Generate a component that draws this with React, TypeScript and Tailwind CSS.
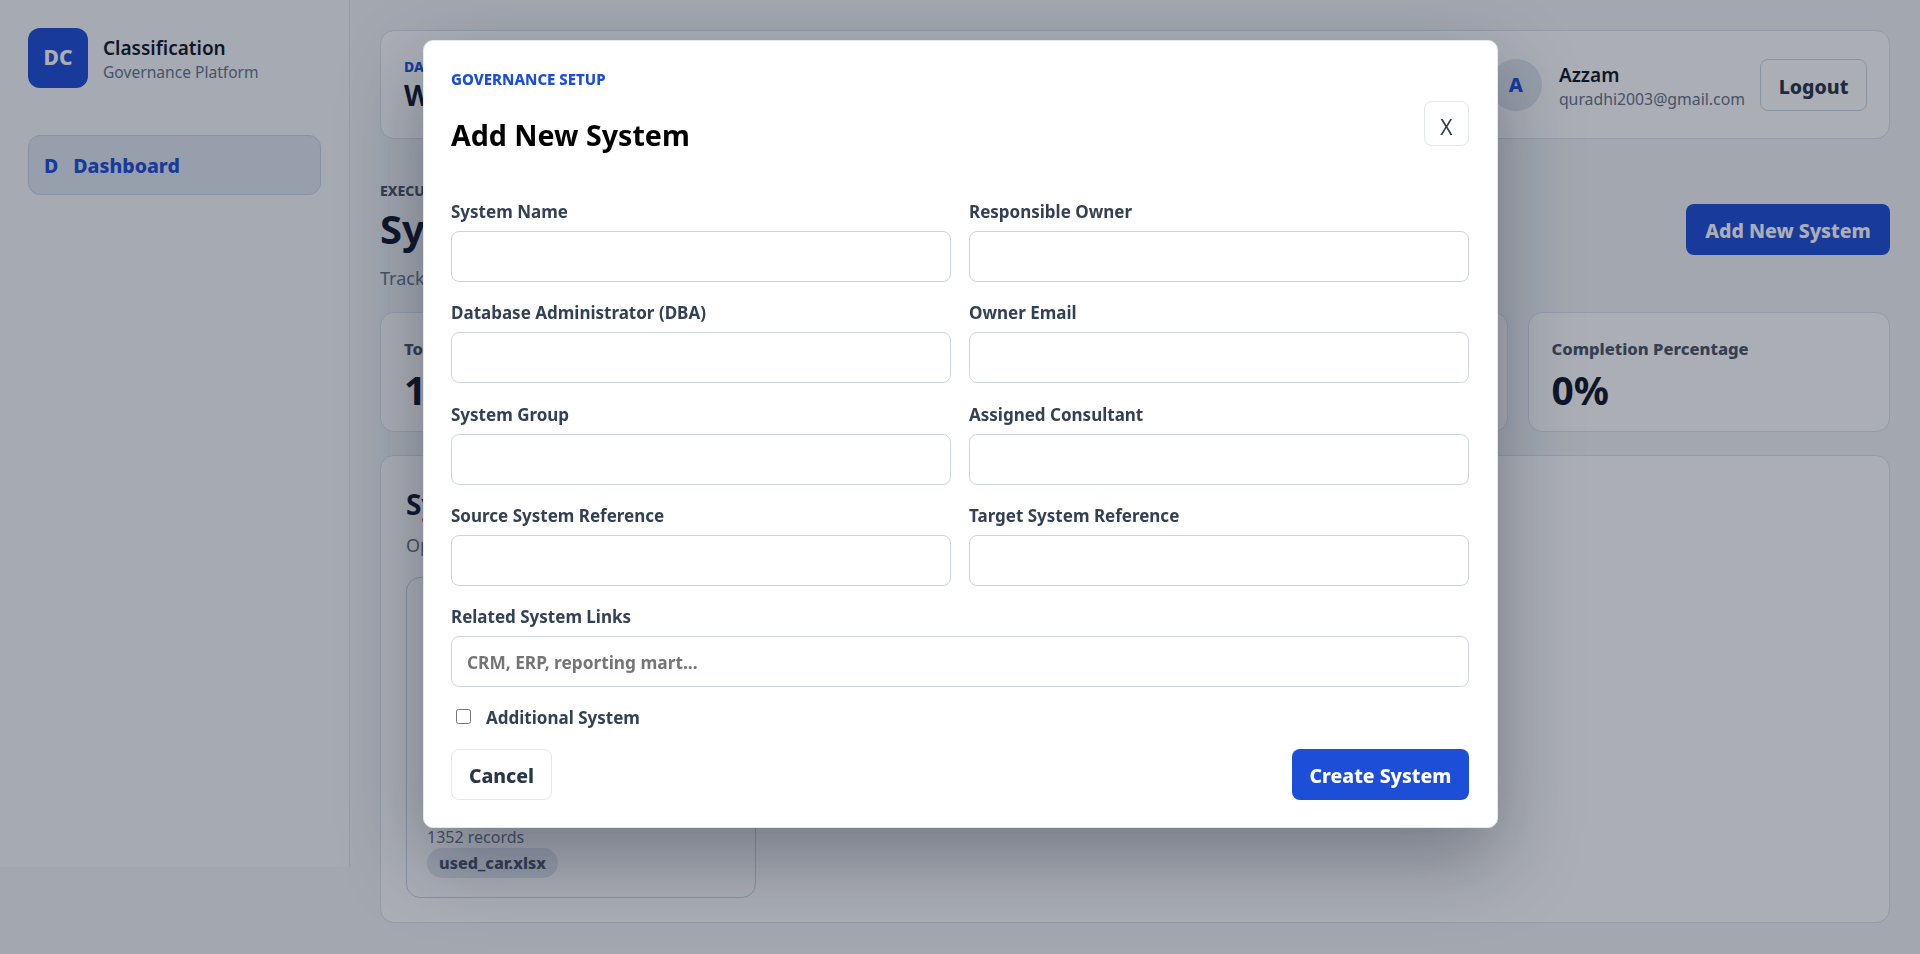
const font = "font-['Noto_Sans','Open_Sans',sans-serif]";

const formFields = [
  "System Name",
  "Responsible Owner",
  "Database Administrator (DBA)",
  "Owner Email",
  "System Group",
  "Assigned Consultant",
  "Source System Reference",
  "Target System Reference",
];

const metrics = [
  { label: "Total Systems", value: "1" },
  { label: "Completed Systems", value: "0" },
  { label: "Active Systems", value: "1" },
  { label: "Completion Percentage", value: "0%" },
];

function Sidebar() {
  return (
    <aside className="w-[350px] h-[867px] shrink-0 bg-[#f8fafc] border-r border-[#dbe3ee] px-[28px] pt-[28px]">
      <div className="flex items-center gap-[15px]">
        <div className="w-[60px] h-[60px] rounded-[12px] bg-[#1d4ed8] text-white flex items-center justify-center text-[21px] font-extrabold">
          DC
        </div>
        <div className="pt-[2px]">
          <div className="text-[19px] leading-[26px] font-semibold text-[#0f172a]">Classification</div>
          <div className="text-[15.6px] leading-[23px] text-[#64748b]">Governance Platform</div>
        </div>
      </div>
      <div className="mt-[47px] h-[60px] pt-[2px] rounded-[12px] border border-[#cbd5e1] bg-[#e0e7f1] flex items-center px-[15px] gap-[15px] text-[#1d4ed8] font-extrabold text-[19.5px]">
        <span>D</span>
        <span>Dashboard</span>
      </div>
    </aside>
  );
}

function Topbar() {
  return (
    <header className="h-[109px] bg-white border border-[#dbe3ee] rounded-[14px] flex items-center justify-between pl-[23px] pr-[22px]">
      <div>
        <div className="text-[14px] font-extrabold uppercase text-[#1d4ed8]">Dashboard</div>
        <div className="text-[28px] leading-[36px] font-bold text-[#0f172a]">Welcome back</div>
      </div>
      <div className="flex items-center gap-[17px]">
        <div className="w-[52px] h-[52px] rounded-full bg-[#e0e7f1] text-[#1d4ed8] font-extrabold text-[20px] flex items-center justify-center">
          A
        </div>
        <div className="-mr-[2px] pt-[3px]">
          <div className="text-[19px] leading-[26px] font-semibold text-[#0f172a]">Azzam</div>
          <div className="text-[15.8px] leading-[23px] text-[#64748b]">quradhi2003@gmail.com</div>
        </div>
        <button className="w-[107px] h-[52px] pt-[4px] rounded-[8px] border border-[#cbd5e1] text-[19.5px] font-extrabold text-[#293548]">
          Logout
        </button>
      </div>
    </header>
  );
}

function Dashboard() {
  return (
    <main className="flex-1 px-[30px] pt-[30px]">
      <Topbar />

      <section className="mt-[42px] flex items-start justify-between">
        <div>
          <div className="text-[14px] leading-[20px] font-extrabold uppercase text-[#475569]">Executive Overview</div>
          <h1 className="mt-[4px] text-[40px] leading-[48px] font-bold text-[#0f172a]">Systems Overview</h1>
          <p className="mt-[12px] text-[18px] leading-[26px] text-[#64748b]">Track classification progress across systems</p>
        </div>
        <button className="mt-[23px] w-[204px] h-[51px] pt-[3px] rounded-[8px] bg-[#1d4ed8] text-white text-[19.5px] font-extrabold">
          Add New System
        </button>
      </section>

      <section className="mt-[21px] grid grid-cols-4 gap-[20px]">
        {metrics.map((m) => (
          <div key={m.label} className="h-[120px] bg-white border border-[#dbe3ee] rounded-[14px] px-[23px] pt-[24px]">
            <div className="text-[16.6px] leading-[24px] font-extrabold text-[#475569]">{m.label}</div>
            <div className="mt-[4px] text-[39px] leading-[50px] font-bold text-[#0f172a]">{m.value}</div>
          </div>
        ))}
      </section>

      <section className="mt-[23px] h-[468px] bg-white border border-[#dbe3ee] rounded-[14px] px-[25px] pt-[30px]">
        <h2 className="text-[28px] leading-[36px] font-bold text-[#0f172a]">Systems</h2>
        <p className="mt-[10px] text-[18px] leading-[26px] text-[#64748b]">Open a system to continue</p>
        <div className="mt-[19px] w-[350px] h-[321px] border border-[#cbd5e1] rounded-[14px] px-[20px] flex flex-col justify-end pb-[19px]">
          <div className="text-[16px] leading-[24px] text-[#64748b]">1352 records</div>
          <span className="self-start -mt-[1px] h-[30px] px-[12px] rounded-full bg-[#e0e7f1] text-[16.2px] leading-[30px] font-extrabold text-[#475569]">
            used_car.xlsx
          </span>
        </div>
      </section>
    </main>
  );
}

function TextField({ label, placeholder }: { label: string; placeholder?: string }) {
  return (
    <label className="block">
      <span className="block pt-[1px] text-[17px] leading-[24px] font-bold text-[#334155]">{label}</span>
      <input
        type="text"
        placeholder={placeholder}
        className="mt-[7px] block w-full h-[51px] pt-[2px] rounded-[8px] border border-[#cbd5e1] bg-white px-[15px] text-[17.3px] font-bold placeholder:text-[#757575] outline-none"
      />
    </label>
  );
}

function AddSystemModal() {
  return (
    <div className="fixed inset-0 bg-[#0f172a]/35 flex justify-center items-start pt-[40px]">
      <form className="w-[1075px] h-[788px] bg-white rounded-[10px] border border-[#e2e8f0] shadow-[0_30px_80px_rgba(15,23,42,0.35)] px-[27.5px] pt-[27px]">
        <div className="flex items-start justify-between">
          <div>
            <div className="text-[15px] leading-[22px] font-extrabold uppercase text-[#1d4ed8]">Governance Setup</div>
            <h2 className="mt-[25px] text-[28.6px] leading-[40px] font-bold text-black">Add New System</h2>
          </div>
          <button type="button" className="mt-[33px] w-[45px] h-[45px] pt-[9px] rounded-[8px] border border-[#e2e8f0] text-[21px] text-[#334155]">
            X
          </button>
        </div>

        <div className="mt-[44px] grid grid-cols-2 gap-x-[18px] gap-y-[18.25px]">
          {formFields.map((f) => (
            <TextField key={f} label={f} />
          ))}
          <div className="col-span-2">
            <TextField label="Related System Links" placeholder="CRM, ERP, reporting mart..." />
          </div>
        </div>

        <label className="mt-[17px] flex items-center gap-[15px] pl-[5px] h-[24px]">
          <input type="checkbox" className="w-[15px] h-[15px] shrink-0" />
          <span className="pt-[3px] text-[17px] font-bold text-[#334155]">Additional System</span>
        </label>

        <div className="mt-[21px] flex items-center justify-between">
          <button type="button" className="w-[101px] h-[51px] pt-[3px] rounded-[8px] border border-[#e2e8f0] text-[19.4px] font-extrabold text-[#293548]">
            Cancel
          </button>
          <button type="submit" className="w-[177px] h-[51px] pt-[3px] rounded-[8px] bg-[#1d4ed8] text-white text-[19.4px] font-extrabold">
            Create System
          </button>
        </div>
      </form>
    </div>
  );
}

export default function App() {
  return (
    <div className={`${font} relative h-[954px] overflow-hidden flex bg-[#f1f4f8]`}>
      <Sidebar />
      <Dashboard />
      <AddSystemModal />
    </div>
  );
}
